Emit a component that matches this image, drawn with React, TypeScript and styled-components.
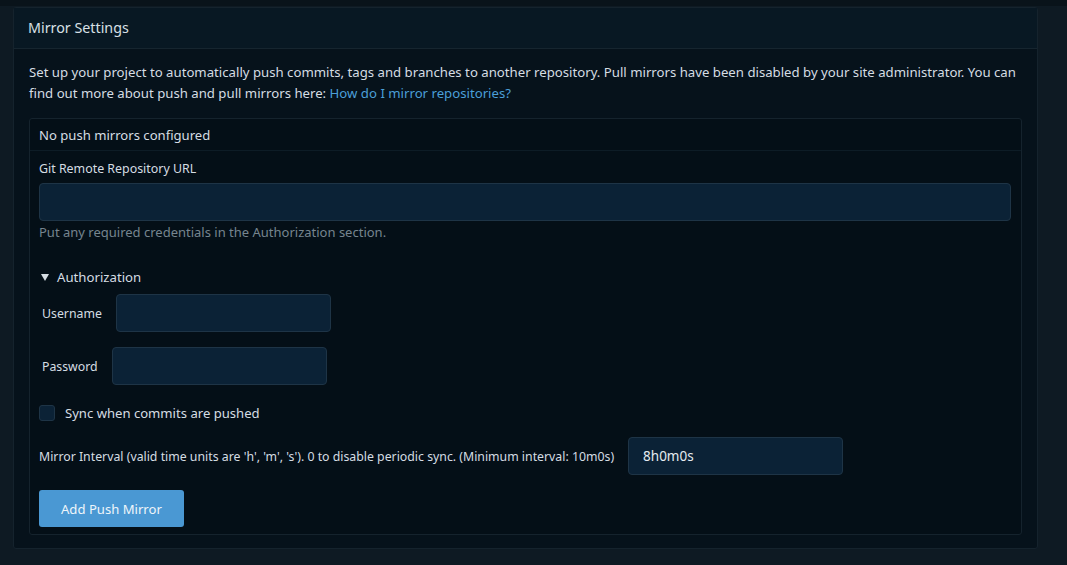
import React, { useState } from 'react';
import styled, { createGlobalStyle } from 'styled-components';

const GlobalStyle = createGlobalStyle`
  html, body {
    margin: 0;
    padding: 0;
    background: #0e1a23;
  }
  body {
    font-family: "Noto Sans", "Open Sans", sans-serif;
    color: #d5dde3;
    -webkit-font-smoothing: antialiased;
  }
`;

const Page = styled.div`
  height: 565px;
  box-sizing: border-box;
  border-top: 6px solid #09131a;
  padding: 1px 29px 0 13px;
  overflow: hidden;
`;

const Card = styled.section`
  border: 1px solid #15232d;
  border-radius: 3px;
  background: #06121b;
`;

const CardHeader = styled.h4`
  margin: 0;
  height: 41px;
  display: flex;
  align-items: center;
  padding: 0 14px 2px 14px;
  box-sizing: border-box;
  font-size: 14.3px;
  font-weight: 400;
  color: #d8e0e6;
  background: #081823;
  border-bottom: 1px solid #16252f;
`;

const CardBody = styled.div`
  padding: 13px 15px 13px 15px;
`;

const Description = styled.p`
  margin: 0 0 14px 0;
  font-size: 13.2px;
  line-height: 21px;
  color: #d5dde3;
`;

const Link = styled.a`
  color: #4b9fd8;
  text-decoration: none;
`;

const Box = styled.div`
  border: 1px solid #15232d;
  border-radius: 3px;
  background: #040f17;
`;

const BoxHeader = styled.div`
  height: 31px;
  display: flex;
  align-items: center;
  padding: 0 9px;
  font-size: 13.1px;
  color: #d5dde3;
  border-bottom: 1px solid #0d1c26;
`;

const BoxBody = styled.div`
  padding: 9px 10px 7px 9px;
`;

const FieldLabel = styled.label`
  display: block;
  font-size: 12.4px;
  line-height: 18px;
  color: #d5dde3;
  margin-bottom: 5px;
`;

const Input = styled.input<{ $width?: number }>`
  box-sizing: border-box;
  width: ${p => (p.$width ? `${p.$width}px` : '100%')};
  height: 38px;
  border: 1px solid #1e3446;
  border-radius: 4px;
  background: #0b2236;
  color: #e4ebf0;
  font-family: inherit;
  font-size: 13.5px;
  padding: 0 14px;
  outline: none;
`;

const HelpText = styled.div`
  font-size: 13px;
  line-height: 18px;
  color: #76858f;
  margin-top: 2px;
`;

const Details = styled.div`
  margin-top: 26px;
`;

const Summary = styled.button`
  display: flex;
  align-items: center;
  gap: 8px;
  background: none;
  border: none;
  padding: 0 0 0 2px;
  font-family: inherit;
  font-size: 13.2px;
  color: #d5dde3;
  cursor: pointer;
  height: 20px;
`;

const Caret = styled.span<{ $open: boolean }>`
  display: inline-block;
  width: 0;
  height: 0;
  border-left: 4px solid transparent;
  border-right: 4px solid transparent;
  border-top: 7px solid #d5dde3;
  transform: rotate(${p => (p.$open ? '0deg' : '-90deg')});
`;

const AuthRows = styled.div`
  display: flex;
  flex-direction: column;
  gap: 15px;
  margin-top: 7px;
  padding-left: 3px;
`;

const InlineField = styled.div`
  display: flex;
  align-items: center;
  gap: 14px;
`;

const InlineLabel = styled.label`
  font-size: 12.3px;
  color: #d5dde3;
`;

const CheckRow = styled.label`
  display: flex;
  align-items: center;
  gap: 10px;
  margin-top: 19px;
  font-size: 13.1px;
  color: #d5dde3;
  cursor: pointer;
`;

const CheckBox = styled.span`
  box-sizing: border-box;
  width: 16px;
  height: 16px;
  border: 1px solid #1e3446;
  border-radius: 3px;
  background: #0b2236;
`;

const IntervalRow = styled.div`
  display: flex;
  align-items: center;
  gap: 14px;
  margin-top: 15px;
`;

const Button = styled.button`
  margin-top: 15px;
  height: 37px;
  padding: 0 22px;
  border: none;
  border-radius: 3px;
  background: #4a98d3;
  color: #eef5fa;
  font-family: inherit;
  font-size: 13.1px;
  cursor: pointer;
`;

export default function App() {
  const [open, setOpen] = useState(true);
  return (
    <>
      <GlobalStyle />
      <Page>
        <Card>
          <CardHeader>Mirror Settings</CardHeader>
          <CardBody>
            <Description>
              Set up your project to automatically push commits, tags and branches to another
              repository. Pull mirrors have been disabled by your site administrator. You can find out
              more about push and pull mirrors here: <Link href="#">How do I mirror repositories?</Link>
            </Description>
            <Box>
              <BoxHeader>No push mirrors configured</BoxHeader>
              <BoxBody>
                <FieldLabel htmlFor="remote">Git Remote Repository URL</FieldLabel>
                <Input id="remote" />
                <HelpText>Put any required credentials in the Authorization section.</HelpText>
                <Details>
                  <Summary onClick={() => setOpen(!open)}>
                    <Caret $open={open} />
                    Authorization
                  </Summary>
                  {open && (
                    <AuthRows>
                      <InlineField>
                        <InlineLabel htmlFor="user">Username</InlineLabel>
                        <Input id="user" $width={215} />
                      </InlineField>
                      <InlineField>
                        <InlineLabel htmlFor="pass">Password</InlineLabel>
                        <Input id="pass" type="password" $width={215} />
                      </InlineField>
                    </AuthRows>
                  )}
                </Details>
                <CheckRow>
                  <CheckBox />
                  Sync when commits are pushed
                </CheckRow>
                <IntervalRow>
                  <InlineLabel htmlFor="interval">
                    Mirror Interval (valid time units are 'h', 'm', 's'). 0 to disable periodic sync.
                    (Minimum interval: 10m0s)
                  </InlineLabel>
                  <Input id="interval" $width={215} defaultValue="8h0m0s" />
                </IntervalRow>
                <Button>Add Push Mirror</Button>
              </BoxBody>
            </Box>
          </CardBody>
        </Card>
      </Page>
    </>
  );
}
